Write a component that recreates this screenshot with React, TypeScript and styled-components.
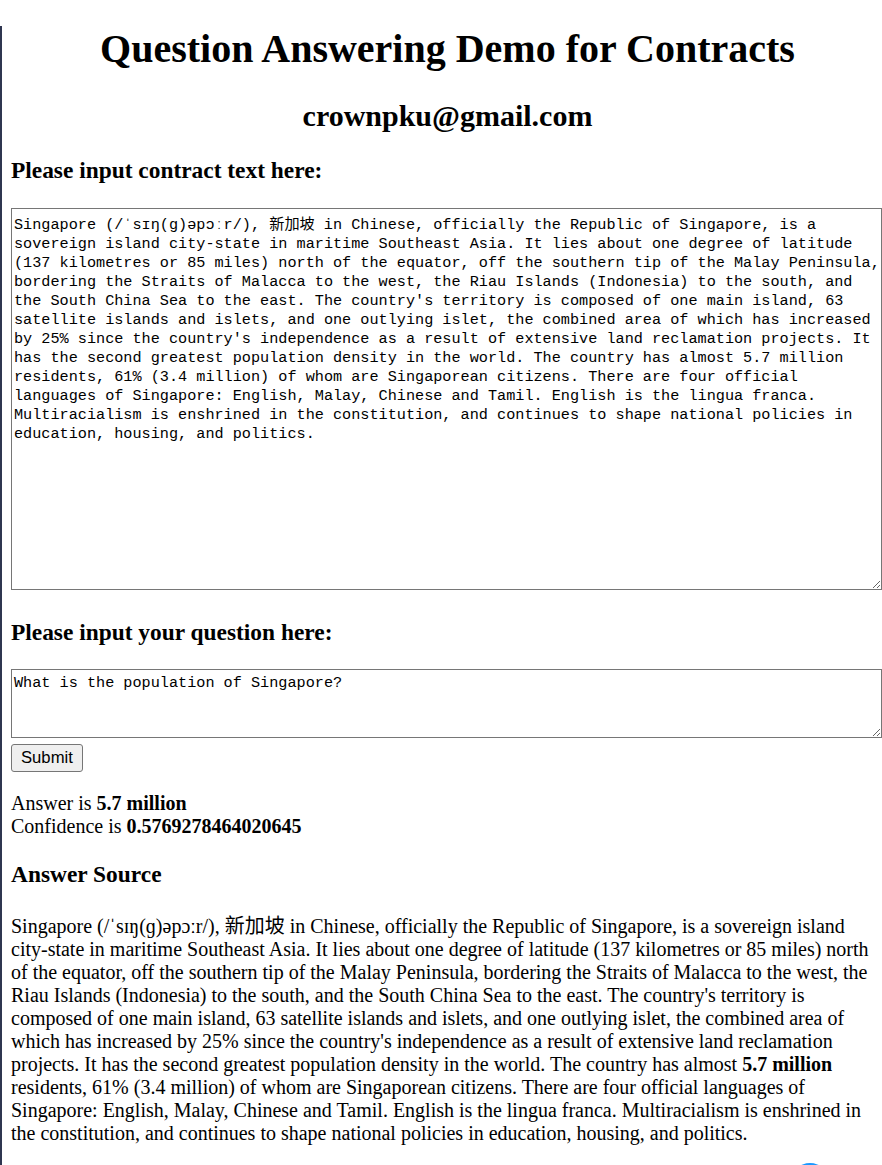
import React from "react";
import styled, { createGlobalStyle } from "styled-components";

const Global = createGlobalStyle`
  html, body {
    margin: 0;
    padding: 0;
    overflow: hidden;
    background: #ffffff;
  }
  body {
    font-family: "Liberation Serif", "Noto Sans CJK SC", serif;
    color: #000000;
  }
`;

const Page = styled.div`
  width: 884px;
  min-height: 1165px;
  box-sizing: border-box;
  border-left: 2px solid #2f3650;
  padding: 0 0 20px 9px;
`;

const Title = styled.h1`
  margin: 25.5px 0 0;
  font-size: 40px;
  line-height: 46px;
  font-weight: bold;
  text-align: center;
`;

const Subtitle = styled.h2`
  margin: 27px 0 0;
  font-size: 30px;
  line-height: 34px;
  font-weight: bold;
  text-align: center;
`;

const SectionTitle = styled.h3<{ $top: number; $bottom: number }>`
  margin: ${(p) => p.$top}px 0 ${(p) => p.$bottom}px;
  font-size: 23.4px;
  line-height: 27px;
  font-weight: bold;
`;

const TextBox = styled.textarea<{ $height: number; $padTop: number }>`
  display: block;
  box-sizing: border-box;
  width: 871px;
  height: ${(p) => p.$height}px;
  margin: 0 0 6px;
  padding: ${(p) => p.$padTop}px 0 2px 2px;
  border: 1px solid #767676;
  border-radius: 0;
  background: #ffffff;
  color: #000000;
  font-family: "Liberation Mono", "Noto Sans CJK SC", monospace;
  font-size: 15.2px;
  line-height: 19px;
  resize: both;
  outline: none;
`;

const SubmitButton = styled.button`
  display: block;
  box-sizing: border-box;
  height: 28px;
  margin: 0;
  padding: 1px 9px;
  border: 1px solid #767676;
  border-radius: 3px;
  background: #efefef;
  color: #000000;
  font-family: "Liberation Sans", Arial, sans-serif;
  font-size: 16.67px;
  line-height: 20px;
`;

const Result = styled.p`
  margin: 20px 0 0;
  font-size: 20px;
  line-height: 23px;
`;

const Source = styled.p`
  margin: 0;
  font-size: 20px;
  line-height: 23px;
`;

const FloatingDot = styled.div`
  position: fixed;
  left: 791px;
  top: 1163px;
  width: 38px;
  height: 38px;
  border-radius: 50%;
  background: #1a98ff;
`;

const contract =
  "Singapore (/ˈsɪŋ(ɡ)əpɔːr/), 新加坡 in Chinese, officially the Republic of Singapore, is a sovereign island city-state in maritime Southeast Asia. It lies about one degree of latitude (137 kilometres or 85 miles) north of the equator, off the southern tip of the Malay Peninsula, bordering the Straits of Malacca to the west, the Riau Islands (Indonesia) to the south, and the South China Sea to the east. The country's territory is composed of one main island, 63 satellite islands and islets, and one outlying islet, the combined area of which has increased by 25% since the country's independence as a result of extensive land reclamation projects. It has the second greatest population density in the world. The country has almost 5.7 million residents, 61% (3.4 million) of whom are Singaporean citizens. There are four official languages of Singapore: English, Malay, Chinese and Tamil. English is the lingua franca. Multiracialism is enshrined in the constitution, and continues to shape national policies in education, housing, and politics.";

const answer = "5.7 million";
const [before, after] = contract.split(answer);

export default function App() {
  return (
    <>
      <Global />
      <Page>
        <Title>Question Answering Demo for Contracts</Title>
        <Subtitle>crownpku@gmail.com</Subtitle>
        <SectionTitle $top={24.5} $bottom={24}>
          Please input contract text here:
        </SectionTitle>
        <TextBox
          $height={382}
          $padTop={7}
          defaultValue={contract}
          spellCheck={false}
        />
        <SectionTitle $top={29} $bottom={23}>
          Please input your question here:
        </SectionTitle>
        <TextBox
          $height={69}
          $padTop={4}
          defaultValue="What is the population of Singapore?"
          spellCheck={false}
        />
        <SubmitButton type="button">Submit</SubmitButton>
        <Result>
          Answer is <b>{answer}</b>
          <br />
          Confidence is <b>0.5769278464020645</b>
        </Result>
        <SectionTitle $top={22.5} $bottom={27.5}>
          Answer Source
        </SectionTitle>
        <Source>
          {before}
          <b>{answer}</b>
          {after}
        </Source>
      </Page>
      <FloatingDot />
    </>
  );
}
